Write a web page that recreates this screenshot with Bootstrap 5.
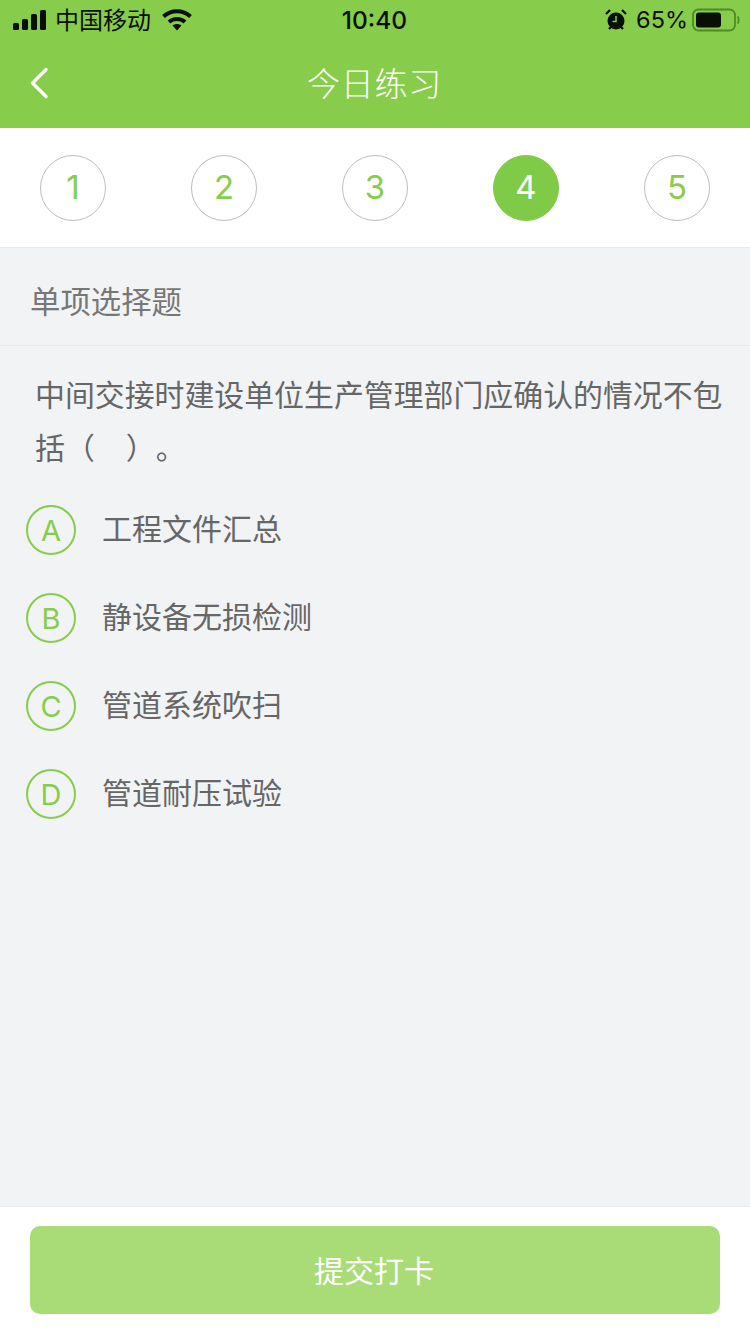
<!DOCTYPE html>
<html lang="zh-CN">
<head>
    <meta charset="UTF-8">
    <meta name="viewport" content="width=device-width, initial-scale=1.0">
    <title>今日练习</title>
    <link href="https://cdn.jsdelivr.net/npm/bootstrap@5.3.0/dist/css/bootstrap.min.css" rel="stylesheet">
    <style>
        html, body { height: 100%; }
        body {
            width: 750px; height: 1334px; overflow: hidden;
            background: #f2f3f5; color: #666;
            font-family: "Open Sans", "Liberation Sans", "Noto Sans CJK SC", sans-serif;
        }
        .app-top { background: #87cd4b; height: 128px; }
        .status-row { height: 40px; padding: 0 10px 0 13px; color: #0a0f05; font-size: 25px; line-height: 40px; }
        .status-carrier { font-size: 24px; margin-left: 8px; margin-right: 11px; }
        .status-side { width: 280px; }
        .status-time { font-size: 24.5px; font-weight: 500; font-family: "Inter", sans-serif; margin-left: -4px; }
        .status-pct { font-family: "Inter", sans-serif; font-size: 23.5px; margin: 0 4px 0 9px; }
        .title-row { height: 88px; }
        .title-text { font-size: 33px; color: #fff; letter-spacing: 0.8px; font-weight: 300; margin-right: 1px; }
        .back-icon { left: 29px; top: 27px; }
        .step-strip { height: 120px; background: #fff; border-bottom: 1px solid #e8e9eb; padding: 27px 40px 0; }
        .step-dot {
            width: 66px; height: 66px; border: 1px solid #bdbdbd; border-radius: 50%;
            color: #87cd4b; font-size: 33px; font-family: "Inter", sans-serif; font-weight: 400;
        }
        .step-dot.is-on { background: #7fca47; border-color: #7fca47; color: #fff; }
        .kind-row { height: 98px; border-bottom: 1px solid #e8e9eb; padding-left: 30px; font-size: 30.4px; line-height: 107px; color: #777; }
        .question-text { font-size: 29.9px; line-height: 53px; padding: 22px 0 0 35px; margin: 0; color: #666; text-spacing-trim: space-all; }
        .answer-list { padding: 12px 0 0 26px; }
        .answer-row { height: 88px; }
        .answer-dot {
            width: 50px; height: 50px; border: 2px solid #87cd4b; border-radius: 50%;
            color: #87cd4b; font-size: 29px; font-family: "Inter", sans-serif; font-weight: 400; padding-top: 2px;
        }
        .answer-text { margin-left: 26px; margin-bottom: 3px; font-size: 30px; color: #666; }
        .submit-bar { height: 128px; background: #fff; border-top: 1px solid #e8e9eb; padding: 19px 30px 0; }
        .submit-btn {
            display: block; width: 690px; height: 88px; border: 0; border-radius: 10px; padding-right: 8px;
            background: #a9dc77; color: #fff; font-size: 30px;
        }
    </style>
</head>
<body>
    <div class="d-flex flex-column h-100">
        <div class="app-top">
            <div class="status-row d-flex justify-content-between align-items-center">
                <div class="status-side d-flex align-items-center">
                    <svg width="34" height="20" viewBox="0 0 34 20"><rect x="0" y="13" width="6" height="7" rx="1.5" fill="#0a0f05"/><rect x="9" y="9" width="6" height="11" rx="1.5" fill="#0a0f05"/><rect x="18" y="4" width="6" height="16" rx="1.5" fill="#0a0f05"/><rect x="27" y="0" width="6" height="20" rx="1.5" fill="#0a0f05"/></svg>
                    <span class="status-carrier">中国移动</span>
                    <svg width="30" height="22" viewBox="0 0 30 22"><path d="M1.500 7.500C9 .5 21 .5 28.500 7.500" fill="none" stroke="#0a0f05" stroke-width="4"/><path d="M7 13c4.500-4 11.500-4 16 0" fill="none" stroke="#0a0f05" stroke-width="4"/><path d="M10.500 16.500c2.500-2 6.500-2 9 0L15 21.500z" fill="#0a0f05"/></svg>
                </div>
                <div class="status-time">10:40</div>
                <div class="status-side d-flex align-items-center justify-content-end">
                    <svg width="22" height="22" viewBox="0 0 22 22"><circle cx="11" cy="12" r="8.500" fill="#0a0f05"/><path d="M11 7v5.500H7.500" fill="none" stroke="#87cd4b" stroke-width="1.500"/><path d="M1 5l4-4M21 5l-4-4M4 20l2-2M18 20l-2-2" stroke="#0a0f05" stroke-width="2.200"/></svg>
                    <span class="status-pct">65%</span>
                    <svg width="48" height="24" viewBox="0 0 48 24"><rect x="1" y="1.500" width="42" height="21" rx="5.500" fill="none" stroke="#4f8a26" stroke-width="1.800"/><rect x="4" y="4.500" width="25" height="15" rx="3" fill="#0a0f05"/><path d="M45.500 8.500c1.500 1 1.500 6 0 7" fill="none" stroke="#4f8a26" stroke-width="1.800"/></svg>
                </div>
            </div>
            <div class="title-row position-relative d-flex align-items-center justify-content-center">
                <svg class="back-icon position-absolute" width="20" height="32" viewBox="0 0 20 32"><path d="M17 2.500L3.500 16 17 29.500" fill="none" stroke="#fff" stroke-width="3.400" stroke-linecap="round" stroke-linejoin="round"/></svg>
                <div class="title-text">今日练习</div>
            </div>
        </div>

        <div class="step-strip d-flex justify-content-between align-items-start">
            <div class="step-dot d-flex align-items-center justify-content-center">1</div>
            <div class="step-dot d-flex align-items-center justify-content-center">2</div>
            <div class="step-dot d-flex align-items-center justify-content-center">3</div>
            <div class="step-dot is-on d-flex align-items-center justify-content-center">4</div>
            <div class="step-dot d-flex align-items-center justify-content-center">5</div>
        </div>

        <div class="kind-row">单项选择题</div>

        <div class="flex-grow-1">
            <p class="question-text">中间交接时建设单位生产管理部门应确认的情况不包括（&nbsp;&nbsp;&nbsp;&nbsp;）。</p>
            <div class="answer-list">
                <div class="answer-row d-flex align-items-center">
                    <div class="answer-dot d-flex align-items-center justify-content-center">A</div>
                    <div class="answer-text">工程文件汇总</div>
                </div>
                <div class="answer-row d-flex align-items-center">
                    <div class="answer-dot d-flex align-items-center justify-content-center">B</div>
                    <div class="answer-text">静设备无损检测</div>
                </div>
                <div class="answer-row d-flex align-items-center">
                    <div class="answer-dot d-flex align-items-center justify-content-center">C</div>
                    <div class="answer-text">管道系统吹扫</div>
                </div>
                <div class="answer-row d-flex align-items-center">
                    <div class="answer-dot d-flex align-items-center justify-content-center">D</div>
                    <div class="answer-text">管道耐压试验</div>
                </div>
            </div>
        </div>

        <div class="submit-bar">
            <button class="submit-btn" type="button">提交打卡</button>
        </div>
    </div>
    <script src="https://cdn.jsdelivr.net/npm/bootstrap@5.3.0/dist/js/bootstrap.bundle.min.js"></script>
</body>
</html>
